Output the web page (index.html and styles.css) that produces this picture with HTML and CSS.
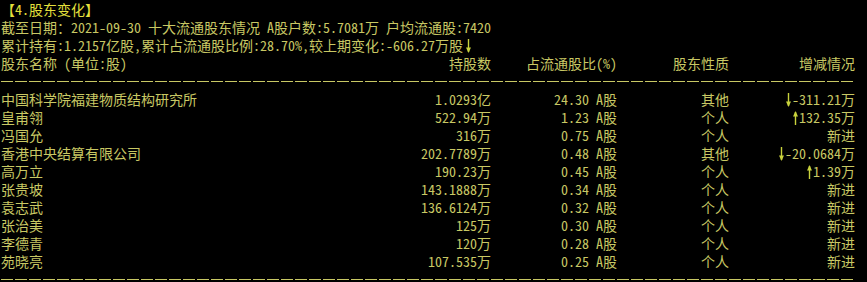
FILE: index.html
```html
<!DOCTYPE html>
<html lang="zh-CN">
<head>
<meta charset="utf-8">
<link rel="stylesheet" href="styles.css">
</head>
<body>
<div class="screen">
  <div class="line title">【4.股东变化】</div>
  <div class="line">截至日期：2021-09-30 十大流通股东情况 A股户数:5.7081万 户均流通股:7420</div>
  <div class="line">累计持有:1.2157亿股,累计占流通股比例:28.70%,较上期变化:-606.27万股<svg class="arrow gap" viewBox="0 0 7 18" width="7" height="18"><path d="M3.5 3V16" /><path class="head" d="M1 11.5L3.5 17L6 11.5Z"/></svg></div>
  <div class="table">
    <div class="row">
      <span class="c1">股东名称 (单位:股)</span>
      <span class="c2">持股数</span>
      <span class="c3">占流通股比(%)</span>
      <span class="c4">股东性质</span>
      <span class="c5">增减情况</span>
    </div>
    <div class="rule-row"><div class="rule"></div></div>
    <div class="row">
      <span class="c1">中国科学院福建物质结构研究所</span>
      <span class="c2">1.0293亿</span>
      <span class="c3">24.30 A股</span>
      <span class="c4">其他</span>
      <span class="c5"><svg class="arrow" viewBox="0 0 7 18" width="7" height="18"><path d="M3.5 3V16" /><path class="head" d="M1 11.5L3.5 17L6 11.5Z"/></svg>-311.21万</span>
    </div>
    <div class="row">
      <span class="c1">皇甫翎</span>
      <span class="c2">522.94万</span>
      <span class="c3">1.23 A股</span>
      <span class="c4">个人</span>
      <span class="c5"><svg class="arrow" viewBox="0 0 7 18" width="7" height="18"><path d="M3.5 17V4" /><path class="head" d="M1 8.5L3.5 3L6 8.5Z"/></svg>132.35万</span>
    </div>
    <div class="row">
      <span class="c1">冯国允</span>
      <span class="c2">316万</span>
      <span class="c3">0.75 A股</span>
      <span class="c4">个人</span>
      <span class="c5">新进</span>
    </div>
    <div class="row">
      <span class="c1">香港中央结算有限公司</span>
      <span class="c2">202.7789万</span>
      <span class="c3">0.48 A股</span>
      <span class="c4">其他</span>
      <span class="c5"><svg class="arrow" viewBox="0 0 7 18" width="7" height="18"><path d="M3.5 3V16" /><path class="head" d="M1 11.5L3.5 17L6 11.5Z"/></svg>-20.0684万</span>
    </div>
    <div class="row">
      <span class="c1">高万立</span>
      <span class="c2">190.23万</span>
      <span class="c3">0.45 A股</span>
      <span class="c4">个人</span>
      <span class="c5"><svg class="arrow" viewBox="0 0 7 18" width="7" height="18"><path d="M3.5 17V4" /><path class="head" d="M1 8.5L3.5 3L6 8.5Z"/></svg>1.39万</span>
    </div>
    <div class="row">
      <span class="c1">张贵坡</span>
      <span class="c2">143.1888万</span>
      <span class="c3">0.34 A股</span>
      <span class="c4">个人</span>
      <span class="c5">新进</span>
    </div>
    <div class="row">
      <span class="c1">袁志武</span>
      <span class="c2">136.6124万</span>
      <span class="c3">0.32 A股</span>
      <span class="c4">个人</span>
      <span class="c5">新进</span>
    </div>
    <div class="row">
      <span class="c1">张治美</span>
      <span class="c2">125万</span>
      <span class="c3">0.30 A股</span>
      <span class="c4">个人</span>
      <span class="c5">新进</span>
    </div>
    <div class="row">
      <span class="c1">李德青</span>
      <span class="c2">120万</span>
      <span class="c3">0.28 A股</span>
      <span class="c4">个人</span>
      <span class="c5">新进</span>
    </div>
    <div class="row">
      <span class="c1">苑晓亮</span>
      <span class="c2">107.535万</span>
      <span class="c3">0.25 A股</span>
      <span class="c4">个人</span>
      <span class="c5">新进</span>
    </div>
    <div class="rule-row"><div class="rule"></div></div>
  </div>
</div>
</body>
</html>
```

FILE: styles.css
```css
html, body {
  margin: 0;
  padding: 0;
  background: #000;
}

.screen {
  width: 867px;
  height: 282px;
  overflow: hidden;
  background: #000;
  color: #c8c864;
  font-family: "Noto Sans Mono CJK SC", "Noto Sans CJK SC", monospace;
  font-size: 14px;
  line-height: 18px;
  padding-left: 1px;
  box-sizing: border-box;
}

.line {
  height: 18px;
  white-space: pre;
}

.title {
  color: #e4e03c;
}

.table {
  display: flex;
  flex-direction: column;
  width: 854px;
}

.row {
  display: grid;
  grid-template-columns: 370px 120px 126px 112px 126px;
  height: 18px;
  white-space: pre;
}

.c2, .c3, .c4, .c5 {
  text-align: right;
}

.rule-row {
  height: 18px;
  display: flex;
  align-items: center;
}

.rule {
  width: 854px;
  height: 1px;
  background: repeating-linear-gradient(90deg, #c8c864 0 12px, transparent 12px 14px);
}

.arrow {
  display: inline-block;
  vertical-align: top;
}

.arrow.gap {
  margin-left: 2px;
}

.arrow path {
  stroke: #c8d23c;
  stroke-width: 1.4;
  fill: none;
}

.arrow path.head {
  fill: #c8d23c;
  stroke: none;
}
```
